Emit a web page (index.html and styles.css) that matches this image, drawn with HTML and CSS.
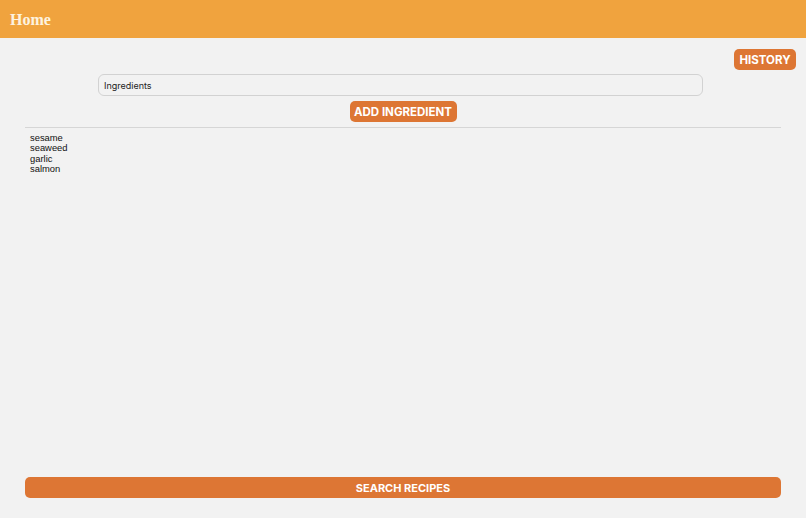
FILE: index.html
```html
<!DOCTYPE html>
<html>
<head>
<meta charset="utf-8">
<link rel="stylesheet" href="styles.css">
</head>
<body>
<div class="app">
  <header class="topbar"><h1 class="title">Home</h1></header>
  <main class="content">
    <div class="history-row"><button class="btn btn-history">HISTORY</button></div>
    <div class="input-row"><div class="input">Ingredients</div></div>
    <div class="add-row"><button class="btn btn-add">ADD INGREDIENT</button></div>
    <div class="divider"></div>
    <ul class="list">
      <li>sesame</li>
      <li>seaweed</li>
      <li>garlic</li>
      <li>salmon</li>
    </ul>
    <div class="spacer"></div>
    <button class="btn btn-search">SEARCH RECIPES</button>
  </main>
</div>
</body>
</html>
```
FILE: styles.css
```css
* { box-sizing: border-box; }
html, body { margin: 0; padding: 0; }
body {
  background: #f2f2f2;
  font-family: "Inter", "Liberation Sans", sans-serif;
  width: 806px;
  height: 518px;
  overflow: hidden;
}
.app { display: flex; flex-direction: column; height: 518px; }
.topbar {
  height: 38px;
  background: #f0a33e;
  display: flex;
  align-items: center;
  padding-left: 10px;
  flex: none;
}
.title {
  margin: 0;
  font-family: "Liberation Serif", serif;
  font-weight: bold;
  font-size: 16px;
  color: #fdf3e0;
  padding-top: 1px;
}
.content {
  flex: 1;
  display: flex;
  flex-direction: column;
  padding: 11px 25px 20px 25px;
}
.btn {
  border: none;
  background: #dd7634;
  color: #fff;
  font-family: "Inter", "Liberation Sans", sans-serif;
  font-weight: 700;
  border-radius: 5px;
  padding: 0;
  cursor: pointer;
}
.history-row { display: flex; justify-content: flex-end; margin-right: -15px; }
.btn-history { width: 62px; height: 21px; font-size: 11.5px; }
.input-row { display: flex; padding-left: 73px; margin-top: 4px; }
.input {
  width: 605px;
  height: 22px;
  border: 1px solid #d2d2d2;
  border-radius: 6px;
  font-size: 9px;
  color: #222;
  display: flex;
  align-items: center;
  padding-left: 5px;
  background: #f2f2f2;
}
.add-row { display: flex; justify-content: center; margin-top: 5px; }
.btn-add { width: 107px; height: 21px; font-size: 11.5px; }
.divider { height: 1px; background: #d6d6d6; margin-top: 5px; }
.list {
  list-style: none;
  margin: 5px 0 0 0;
  padding: 0 0 0 5px;
  font-family: "Liberation Sans", sans-serif;
  font-size: 9.4px;
  line-height: 10.3px;
  color: #111;
}
.spacer { flex: 1; }
.btn-search { width: 756px; height: 21px; font-size: 11px; }
```
